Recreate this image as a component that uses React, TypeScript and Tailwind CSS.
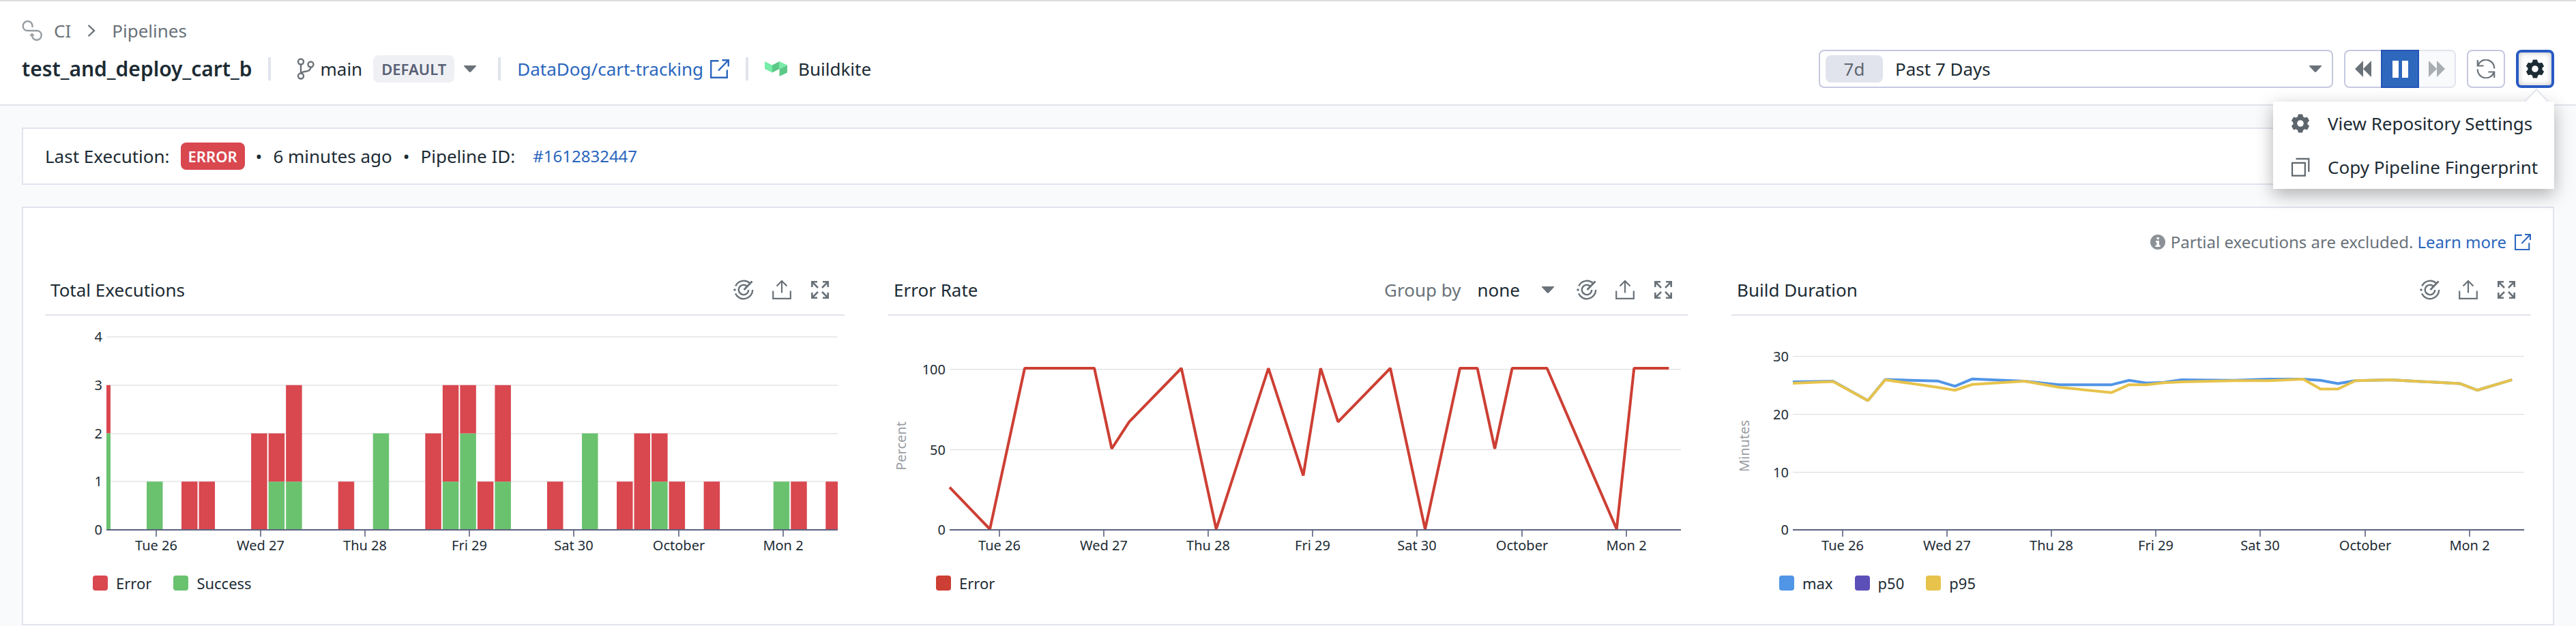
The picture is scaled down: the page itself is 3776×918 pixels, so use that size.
import React from "react";

const DAYS = ["Tue 26", "Wed 27", "Thu 28", "Fri 29", "Sat 30", "October", "Mon 2"];
const WIDTH = 1172;
const HEIGHT = 350;
const LEFT = 90;
const RIGHT = 1162;
const BASE = 314;
const FIRST = 149;
const STEP = 25.52;

const slotX = (slot: number) => FIRST + slot * STEP;

type Point = [number, number];

/* [slot, successes, errors]; one slot is four hours */
const EXECUTIONS: [number, number, number][] = [
  [0, 1, 0], [2, 0, 1], [3, 0, 1], [6, 0, 2], [7, 1, 1], [8, 1, 2], [11, 0, 1], [13, 2, 0],
  [16, 0, 2], [17, 1, 2], [18, 2, 1], [19, 0, 1], [20, 1, 2], [23, 0, 1], [25, 2, 0], [27, 0, 1],
  [28, 0, 2], [29, 1, 1], [30, 0, 1], [32, 0, 1], [36, 1, 0], [37, 0, 1], [39, 0, 1],
];

const ERROR_RATE: Point[] = [
  [-2.32, 26], [0, 0], [2, 100], [6, 100], [7, 50], [8, 66.7], [11, 100], [13, 0], [16, 100],
  [18, 33.3], [19, 100], [20, 66.7], [23, 100], [25, 0], [27, 100], [28, 100], [29, 50],
  [30, 100], [32, 100], [36, 0], [37, 100], [39, 100],
];

const P95: Point[] = [
  [-2.32, 25.2], [0, 25.5], [2, 22.2], [3, 25.8], [6, 24.5], [7, 24], [8, 25], [11, 25.55],
  [13, 24.5], [16, 23.6], [17, 24.95], [18, 24.95], [19, 25.3], [20, 25.45], [23, 25.65],
  [25, 25.65], [27, 25.9], [28, 24.2], [29, 24.2], [30, 25.65], [32, 25.8], [36, 25.15],
  [37, 24], [39, 25.8],
];

const MAX: Point[] = [
  [-2.32, 25.45], [0, 25.55], [2, 22.2], [3, 25.85], [6, 25.6], [7, 24.7], [8, 25.95], [11, 25.55],
  [13, 24.95], [16, 24.95], [17, 25.7], [18, 25.25], [19, 25.35], [20, 25.8], [23, 25.7],
  [25, 25.9], [27, 25.9], [28, 25.7], [29, 25.15], [30, 25.65], [32, 25.8], [36, 25.15],
  [37, 24], [39, 25.8],
];

function Caret() {
  return (
    <svg viewBox="0 0 18 10" className="h-[10px] w-[18px] shrink-0 fill-[#6a7279]" aria-hidden="true">
      <path d="M0 0h18v1l-7.400 8a2.200 2.200 0 0 1-3.200 0L0 1z" />
    </svg>
  );
}

function ExternalIcon({ className }: { className: string }) {
  return (
    <svg viewBox="0 0 28 28" className={className} fill="none" stroke="currentColor" strokeWidth="2.4" aria-hidden="true">
      <path d="M12.5 2.2H1.2v24.6h23.6V15.5M17.5 1.2h9.3v9.3M26.5 1.5 12 16.5" />
    </svg>
  );
}

function GearIcon({ className }: { className: string }) {
  return (
    <svg viewBox="0 0 28 28" className={className} fill="currentColor" aria-hidden="true">
      <circle cx="14" cy="14" r="7.7" fill="none" stroke="currentColor" strokeWidth="5.8" />
      {[0, 60, 120, 180, 240, 300].map((angle) => (
        <path key={angle} d="M9.600 6 10.600 1.500a1 1 0 0 1 1-.9h4.800a1 1 0 0 1 1 .9L18.400 6z" transform={`rotate(${angle} 14 14)`} />
      ))}
    </svg>
  );
}

function MonitorIcon() {
  return (
    <svg viewBox="0 0 30 30" className="h-[30px] w-[30px]" fill="none" stroke="currentColor" strokeWidth="2.4" aria-hidden="true">
      <path d="M24 5.2A13.2 13.2 0 0 0 3.2 9.6M28.2 15A13.2 13.2 0 0 1 3 20.5M20 9.8A7.2 7.2 0 1 0 22.2 15" />
      <path d="M15.5 15 27.5 2.5" strokeWidth="2.8" />
      <circle cx="2" cy="15" r="1.8" fill="currentColor" stroke="none" />
    </svg>
  );
}

function ExportIcon() {
  return (
    <svg viewBox="0 0 28 30" className="h-[30px] w-[28px]" fill="none" stroke="currentColor" strokeWidth="2.2" aria-hidden="true">
      <path d="M1.2 16.5v11.3h25.6V16.5M14 19.5V2.5M6.5 9.5 14 2l7.5 7.5" />
    </svg>
  );
}

function ExpandIcon() {
  return (
    <svg viewBox="0 0 26 26" className="h-[26px] w-[26px]" fill="none" stroke="currentColor" strokeWidth="2.6" aria-hidden="true">
      <path d="M1.3 9V1.3H9M1.5 1.5 10 10M17 1.3h7.7V9M24.5 1.5 16 10M1.3 17v7.7H9M1.5 24.5 10 16M17 24.7h7.7V17M24.5 24.5 16 16" />
    </svg>
  );
}

function Divider() {
  return <span className="h-[34px] w-1 shrink-0 bg-[#e1e4ed]" />;
}

type FrameProps = {
  name: string;
  rows: { label: string; y: number }[];
  axis?: string;
  gridWidth: number;
  children: React.ReactNode;
};

function ChartFrame({ name, rows, axis, gridWidth, children }: FrameProps) {
  return (
    <svg viewBox={`0 0 ${WIDTH} ${HEIGHT}`} role="img" aria-label={name} className="block h-auto w-full text-[20px]">
      {rows.map((row) => (
        <g key={row.label}>
          {row.y < BASE && (
            <rect x={LEFT} y={row.y - 1} width={RIGHT - LEFT} height={gridWidth} fill={gridWidth > 1 ? "#ebebeb" : "#d9dadc"} />
          )}
          <text x={LEFT - 6} y={row.y + 7} textAnchor="end" fill="#1c2b34">
            {row.label}
          </text>
        </g>
      ))}
      {axis && (
        <text x="26" y="191" textAnchor="middle" fill="#989da2" transform="rotate(-90 26 191)">
          {axis}
        </text>
      )}
      {children}
      <rect x={LEFT} y={BASE - 1} width={RIGHT - LEFT} height="2" fill="#5d6380" />
      {DAYS.map((day, i) => {
        const x = 163 + Math.round(i * 153.1);
        return (
          <g key={day}>
            <rect x={x - 1} y={BASE + 1} width="2" height="9" fill="#7b8098" />
            <text x={x} y="344" textAnchor="middle" fill="#1c2b34">
              {day}
            </text>
          </g>
        );
      })}
    </svg>
  );
}

function Line({ points, unit, color }: { points: Point[]; unit: number; color: string }) {
  return (
    <polyline
      points={points.map(([slot, value]) => `${Math.max(LEFT, slotX(slot))},${BASE - 1 - value * unit}`).join(" ")}
      fill="none"
      stroke={color}
      strokeWidth="4"
      strokeLinejoin="bevel"
    />
  );
}

function Widget({ title, legend, controls, children }: {
  title: string;
  legend: { label: string; swatch: string }[];
  controls?: React.ReactNode;
  children: React.ReactNode;
}) {
  return (
    <section className="min-w-0">
      <header className="flex h-[74px] items-center border-b-2 border-[#e1e4ed] px-2">
        <h2 className="flex-1 text-[26px] leading-9">{title}</h2>
        {controls}
        <div className="flex text-[#6a7279]">
          <button type="button" aria-label="Create monitor" className="flex h-8 w-14 items-center justify-center"><MonitorIcon /></button>
          <button type="button" aria-label="Export" className="flex h-8 w-14 items-center justify-center"><ExportIcon /></button>
          <button type="button" aria-label="Full screen" className="flex h-8 w-14 items-center justify-center"><ExpandIcon /></button>
        </div>
      </header>
      {children}
      <ul className="mt-7 flex gap-8 pl-[70px] text-[22px] leading-7">
        {legend.map((item) => (
          <li key={item.label} className="flex items-center gap-3">
            <span className={`h-[22px] w-[22px] rounded-[4px] ${item.swatch}`} />
            {item.label}
          </li>
        ))}
      </ul>
    </section>
  );
}

export default function App() {
  const barHeight = 70.75;
  return (
    <div className="min-h-screen bg-[#f9fafc] font-['Noto_Sans',sans-serif] text-[26px] leading-9 text-[#1c2b34]">
      <header className="flex items-end justify-between border-y-2 border-t-[#dcdcdc] border-b-[#e1e4ed] bg-white px-8 pt-[25px] pb-6">
        <div>
          <nav aria-label="Breadcrumb" className="flex items-center text-[#6a7279]">
            <svg viewBox="0 0 30 30" className="mr-[17px] h-[30px] w-[30px]" fill="none" stroke="#979ca1" strokeWidth="2.4" aria-hidden="true">
              <path d="M15.500 10V8a6.900 6.900 0 1 0-13.800 0c0 4.200 2.800 7 7 7h13c4.200 0 7 2.700 7 6.800a6.900 6.900 0 0 1-13.800 0V20.500" />
              <path d="m10.800 22.500 4.100-4.200 4.100 4.200z" fill="#979ca1" stroke="none" />
            </svg>
            <a href="#ci">CI</a>
            <svg viewBox="0 0 12 18" className="mx-6 h-[18px] w-3" fill="none" stroke="currentColor" strokeWidth="2.4" aria-hidden="true">
              <path d="m1.5 1 8.500 8-8.500 8" />
            </svg>
            <a href="#pipelines">Pipelines</a>
          </nav>
          <div className="mt-[10px] flex h-14 items-center">
            <h1 className="mr-6 text-[30px] font-semibold">test_and_deploy_cart_b</h1>
            <Divider />
            <button type="button" className="mr-8 ml-[38px] flex items-center">
              <svg viewBox="0 0 26 32" className="mr-2 h-8 w-[26px]" fill="none" stroke="#6a7279" strokeWidth="2.4" aria-hidden="true">
                <circle cx="6" cy="5.500" r="4" />
                <circle cx="6" cy="26.500" r="4" />
                <circle cx="20.500" cy="9.500" r="4" />
                <path d="M6 9.500v13M20.500 13.500c0 5-4 6-8.500 6.500-3 .4-5 1-6 3" />
              </svg>
              main
              <span className="mr-[14px] ml-4 rounded-lg bg-[#eff0f4] px-3 text-[22px] leading-10 font-semibold text-[#585f75]">DEFAULT</span>
              <Caret />
            </button>
            <Divider />
            <a href="#repository" className="mr-6 ml-6 flex items-center gap-[10px] text-[#2b66bd]">
              DataDog/cart-tracking
              <ExternalIcon className="h-7 w-7" />
            </a>
            <Divider />
            <svg viewBox="0 0 33 22" className="mr-4 ml-6 h-[22px] w-[33px]" aria-hidden="true">
              <path d="M0 0v11l11 5.500v-11zM21.500 0v11L33 5.500z" fill="#77eda9" />
              <path d="M11 5.500 21.500 0v11L11 16.500zM33 5.500v11L21.500 22V11z" fill="#5dc987" />
            </svg>
            Buildkite
          </div>
        </div>

        <div className="flex items-center gap-4">
          <button type="button" className="flex h-14 w-[754px] items-center rounded-lg border-2 border-[#c5c8df] bg-white pr-[15px] pl-2">
            <span className="w-[84px] rounded-lg bg-[#e1e4ed] leading-10 text-[#5f666e]">7d</span>
            <span className="ml-[18px] flex-1 text-left">Past 7 Days</span>
            <Caret />
          </button>
          <div className="flex h-14">
            <button type="button" aria-label="Step back" className="flex w-[54px] items-center justify-center rounded-l-lg border-2 border-r-0 border-[#c5c8df] text-[#6a7279]">
              <svg viewBox="0 0 26 24" className="h-6 w-[26px]" fill="currentColor" aria-hidden="true"><path d="M13 0v24L1 12zM25 0v24L13 12z" /></svg>
            </button>
            <button type="button" aria-label="Pause" className="flex w-14 items-center justify-center gap-[5px] border-2 border-[#2553b8] bg-[#2d68bc]">
              <span className="h-[25px] w-[9px] bg-white" />
              <span className="h-[25px] w-[9px] bg-white" />
            </button>
            <button type="button" aria-label="Step forward" disabled className="flex w-[54px] items-center justify-center rounded-r-lg border-2 border-l-0 border-[#e1e4ed] bg-[#f9fafc] text-[#a9aeb2]">
              <svg viewBox="0 0 26 24" className="h-6 w-[26px]" fill="currentColor" aria-hidden="true"><path d="M1 0v24l12-12zM13 0v24l12-12z" /></svg>
            </button>
          </div>
          <button type="button" aria-label="Refresh" className="flex h-14 w-14 items-center justify-center rounded-lg border-2 border-[#c5c8df] text-[#6a7279]">
            <svg viewBox="0 0 28 28" className="h-7 w-7" fill="none" stroke="currentColor" strokeWidth="2.2" aria-hidden="true">
              <path d="M1.800 1v8.500h8.700M2.300 9.200A12.300 12.300 0 0 1 26.300 13.500M26.200 27v-8.500h-8.700M25.700 18.800A12.300 12.300 0 0 1 1.700 14.500" />
            </svg>
          </button>
          <div className="relative">
            <button type="button" aria-label="Settings" aria-expanded="true" className="flex h-14 w-14 items-center justify-center rounded-lg border-4 border-[#275ac5] bg-white text-[#1c2b34] shadow-[inset_0_0_8px_rgba(0,0,0,0.25)]">
              <GearIcon className="h-7 w-7" />
            </button>
            <div role="menu" className="absolute top-full right-0 z-10 mt-5 w-[412px] bg-white shadow-[0_8px_24px_rgba(0,0,0,0.3)]">
              <svg viewBox="0 0 36 20" className="absolute right-2 bottom-full h-5 w-9" aria-hidden="true">
                <path d="M1 20 18 2l17 18" fill="#fff" stroke="#e1e4ed" strokeWidth="2" />
              </svg>
              <button type="button" role="menuitem" className="flex h-16 w-full items-center gap-[26px] pl-[26px] whitespace-nowrap">
                <GearIcon className="h-7 w-7 text-[#5d656c]" />
                View Repository Settings
              </button>
              <button type="button" role="menuitem" className="flex h-16 w-full items-center gap-[26px] pl-[26px] whitespace-nowrap">
                <svg viewBox="0 0 28 28" className="h-7 w-7 text-[#5d656c]" fill="none" stroke="currentColor" strokeWidth="2.2" aria-hidden="true">
                  <path d="M2 7.800h18.800v18.800H2zM7.500 1.800h18.800V21" />
                </svg>
                Copy Pipeline Fingerprint
              </button>
            </div>
          </div>
        </div>
      </header>

      <main className="flex flex-col gap-8 px-8 pt-8">
        <section className="flex h-[84px] items-center border-2 border-[#e1e4ed] bg-white px-8">
          <span>Last Execution:</span>
          <span className="mx-4 rounded-lg bg-[#d9474f] px-[11px] text-[22px] leading-10 font-semibold text-white">ERROR</span>
          <span>•</span>
          <span className="mx-4">6 minutes ago</span>
          <span>•</span>
          <span className="mr-[26px] ml-4">Pipeline ID:</span>
          <a href="#execution" className="text-[24px] text-[#2b66bd]">#1612832447</a>
        </section>

        <section className="border-2 border-[#e1e4ed] bg-white px-8 pt-8 pb-[46px]">
          <p className="flex items-center justify-end text-[24px] text-[#6a7279]">
            <svg viewBox="0 0 22 22" className="mr-2 h-[22px] w-[22px]" aria-hidden="true">
              <circle cx="11" cy="11" r="11" fill="#8b9197" />
              <path d="M9.500 4h3.400v3H9.500zM8 9h5v6.500h1.500V18H7.500v-2.500H9.500v-4H8z" fill="#fff" />
            </svg>
            Partial executions are excluded.
            <a href="#learn" className="ml-[6px] flex items-center gap-3 text-[#2b66bd]">
              Learn more
              <ExternalIcon className="h-6 w-6" />
            </a>
          </p>

          <div className="mt-4 grid grid-cols-3 gap-16">
            <Widget
              title="Total Executions"
              legend={[{ label: "Error", swatch: "bg-[#d9474f]" }, { label: "Success", swatch: "bg-[#6ac26f]" }]}
            >
              <ChartFrame name="Total executions" gridWidth={2} rows={[4, 3, 2, 1, 0].map((n) => ({ label: String(n), y: Math.round(BASE - n * barHeight) }))}>
                <rect x={LEFT} y={BASE - 3 * barHeight} width="6" height={barHeight} fill="#d9474f" />
                <rect x={LEFT} y={BASE - 2 * barHeight} width="6" height={2 * barHeight} fill="#6ac26f" />
                {EXECUTIONS.map(([slot, ok, failed]) => {
                  const x = slotX(slot);
                  const w = Math.min(23.5, RIGHT - x);
                  return (
                    <g key={slot}>
                      <rect x={x} y={BASE - ok * barHeight} width={w} height={ok * barHeight} fill="#6ac26f" />
                      <rect x={x} y={BASE - (ok + failed) * barHeight} width={w} height={failed * barHeight} fill="#d9474f" />
                    </g>
                  );
                })}
              </ChartFrame>
            </Widget>

            <Widget
              title="Error Rate"
              legend={[{ label: "Error", swatch: "bg-[#cd3f34]" }]}
              controls={
                <div className="mr-5 flex items-center">
                  <span className="mr-6 text-[#6a7279]">Group by</span>
                  <button type="button" className="flex items-center gap-8">none <Caret /></button>
                </div>
              }
            >
              <ChartFrame name="Error rate" axis="Percent" gridWidth={1} rows={[{ label: "100", y: 79 }, { label: "50", y: 197 }, { label: "0", y: BASE }]}>
                <Line points={ERROR_RATE} unit={2.36} color="#cd3f34" />
              </ChartFrame>
            </Widget>

            <Widget
              title="Build Duration"
              legend={[
                { label: "max", swatch: "bg-[#5195e6]" },
                { label: "p50", swatch: "bg-[#5c4fb8]" },
                { label: "p95", swatch: "bg-[#e7c34c]" },
              ]}
            >
              <ChartFrame name="Build duration" axis="Minutes" gridWidth={1} rows={[{ label: "30", y: 60 }, { label: "20", y: 145 }, { label: "10", y: 230 }, { label: "0", y: BASE }]}>
                <Line points={MAX} unit={8.49} color="#5195e6" />
                <Line points={P95} unit={8.49} color="#e7c34c" />
              </ChartFrame>
            </Widget>
          </div>
        </section>
      </main>
    </div>
  );
}
